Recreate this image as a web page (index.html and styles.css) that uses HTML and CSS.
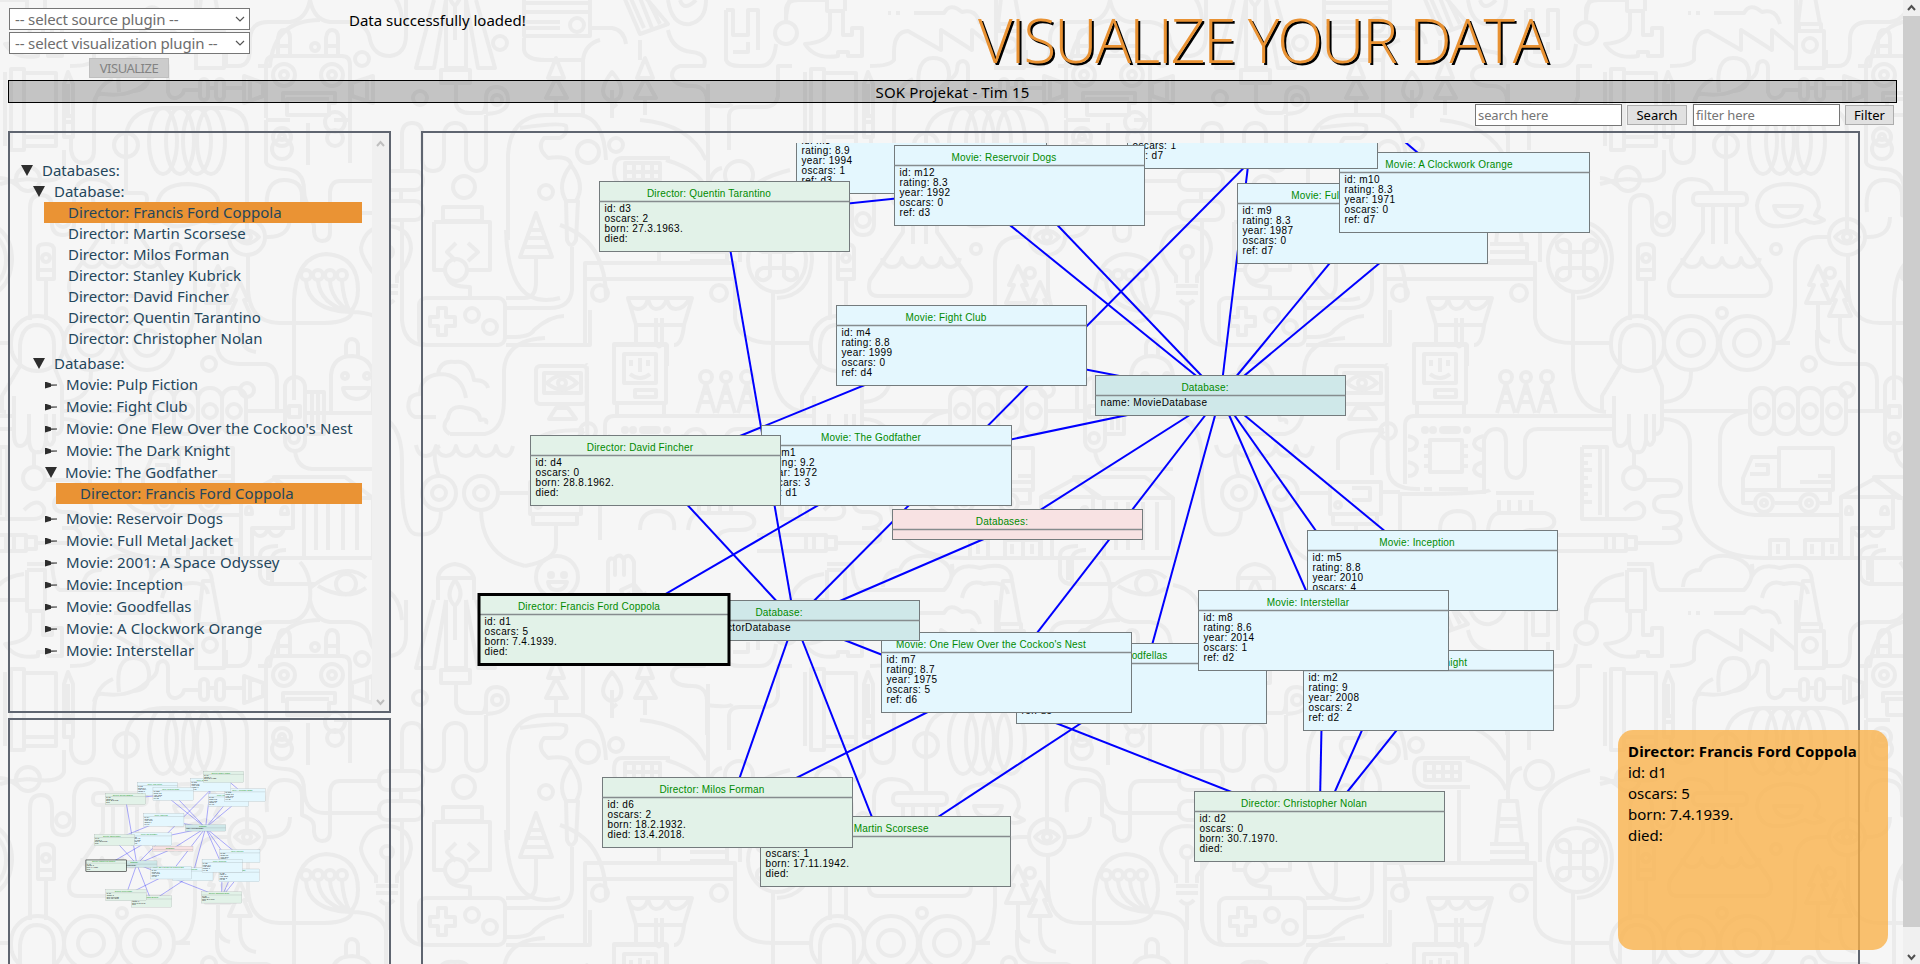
FILE: index.html
```html
<!DOCTYPE html>
<html lang="en">
<head>
<meta charset="utf-8">
<title>Visualize your data</title>
<link rel="stylesheet" href="styles.css">
</head>
<body>
<svg class="wallpaper" width="1903" height="964" aria-hidden="true">
  <defs>
    <g id="tile">
      <!-- book, pencil and looping cable -->
      <path d="M24 73H56V146H24M24 137H56"/><path class="solid" d="M11 69H24V150H11z"/><path d="M5 72V146"/>
      <path d="M64 84L68 72L73 84V137H64zM64 116H73M64 122H73M68 84V116"/>
      <path d="M71 137V150Q73 163 83 163Q94 163 94 150V110Q95 86 113 79M94 102Q96 92 104 94Q132 98 149 80"/>
      <path d="M119 92Q115 58 133 58Q149 58 149 75Q149 90 133 91"/>
      <path d="M149 80Q156 76 157 70Q157 61 163 61Q168 62 168 68V92Q170 99 176 98Q183 96 184 90H198M208 88H215M224 88H244"/>
      <rect x="200" y="79" width="8" height="21" rx="4"/><rect x="216" y="79" width="8" height="21" rx="4"/>
      <path d="M244 76L263 83V96L244 103zM373 76L352 83V96L373 103zM250 79V100M367 79V100"/>
      <!-- robot -->
      <path d="M266 118V65Q266 56 275 56H342Q350 56 350 65V118"/>
      <circle cx="284" cy="75" r="11"/><circle cx="332" cy="75" r="11"/><circle class="solid" cx="284" cy="75" r="4"/><circle class="solid" cx="332" cy="75" r="4"/>
      <path d="M283 103V93H335V103H329V115H287V99H329"/>
      <path d="M278 55V38Q279 30 284 30Q290 30 290 38V55M326 55V38Q327 30 332 30Q338 30 338 38V55M278 46H290M326 46H338"/>
      <circle class="solid" cx="315" cy="47" r="4"/>
      <path d="M226 66H238Q250 66 250 48V38Q251 22 268 22H290Q306 20 310 0Q314 20 330 22H350Q368 24 370 40Q374 56 390 56Q406 54 406 35V0"/>
      <path d="M226 66V50M196 0V66"/>
      <path d="M266 120V162Q267 168 285 169Q304 170 304 190Q305 213 325 213H381M266 120H290M334 120H350M308 123V165M350 118V163"/>
      <circle cx="282" cy="137" r="9"/><circle cx="282" cy="137" r="3"/><circle class="solid" cx="282" cy="149" r="10"/>
      <circle class="solid" cx="335" cy="122" r="10"/><circle cx="335" cy="138" r="8"/>
      <path d="M267 212Q264 180 284 180Q302 180 302 196M302 190V215Q314 219 314 226V232Q315 241 322 241Q330 241 330 232V192Q331 181 340 181H381"/>
      <!-- coil -->
      <path d="M126 145V135Q130 108 165 108H225Q247 110 247 132V230"/>
      <ellipse cx="163" cy="141" rx="14" ry="33"/><ellipse cx="180" cy="141" rx="14" ry="33"/><ellipse cx="197" cy="141" rx="14" ry="33"/><ellipse cx="211" cy="141" rx="14" ry="33"/>
      <circle class="solid" cx="126" cy="145" r="12"/><path d="M126 145V192"/>
      <!-- flask -->
      <rect x="93" y="193" width="54" height="12" rx="5"/>
      <path d="M103 206V232L70 280Q66 296 78 296H162Q174 296 170 280L137 232V206M113 206V244M126 206V244"/>
      <path class="fat" d="M113 232V243M126 232V243"/>
      <path d="M82 258Q84 267 92 267Q100 267 102 258Q104 267 112 267Q120 267 122 258Q124 267 132 267Q140 267 141 258Q143 267 151 267Q158 266 160 258"/>
      <!-- speech bubble -->
      <path d="M215 215L224 220Q214 226 205 220Q158 238 157 205Q160 184 188 184Q219 186 219 207z"/><path d="M174 206H202Q200 217 188 217Q176 217 174 206z"/>
      <!-- cables beside the flask -->
      <path d="M30 320V208Q30 195 41 195Q52 195 52 208V225Q53 235 63 235Q73 235 74 225V196Q76 179 92 179Q110 180 112 192"/>
      <circle cx="63" cy="220" r="7"/><circle class="solid" cx="28" cy="179" r="12"/><path d="M0 178Q8 178 18 186M28 179Q60 184 64 172V150M0 184Q14 180 28 179"/>
      <path d="M38 248Q38 244 46 244Q54 244 54 250V279H38zM46 279V320M38 270H54"/><circle cx="46" cy="258" r="4"/>
      <circle cx="247" cy="237" r="18"/><path d="M235 237Q247 224 259 237Q247 250 235 237z"/><circle class="solid" cx="247" cy="237" r="4"/>
      <path d="M229 237H218Q196 238 195 262V305Q193 343 175 343M248 256V290Q250 323 280 323H325Q350 322 352 312M266 237Q290 238 290 217"/>
      <circle cx="176" cy="249" r="5"/><circle cx="230" cy="273" r="5"/><circle cx="122" cy="313" r="5"/>
      <!-- fir trees -->
      <path d="M218 266L209 285H214L206 303H230L222 285H227zM240 282L232 300H236L229 316H251L244 300H248zM218 303V330Q220 340 230 342M240 316V330Q240 350 256 352"/>
      <!-- reel -->
      <path d="M294 400V300Q296 256 326 254Q358 256 358 290Q358 304 350 312M350 312Q382 312 386 330V370"/>
      <circle cx="306" cy="275" r="5"/><circle cx="318" cy="275" r="5"/><circle cx="330" cy="275" r="5"/><circle cx="342" cy="275" r="5"/>
      <path d="M306 281Q308 310 350 312M318 281Q320 304 350 312M330 281Q331 299 350 312M342 281Q343 298 350 312"/>
      <!-- bulb, capsules -->
      <path d="M376 283V276Q361 258 361 248Q365 226 387 226Q410 227 411 248Q410 262 397 276V283"/><circle cx="387" cy="252" r="6"/>
      <path d="M376 286H398M376 293H398M380 300Q387 308 394 300M387 258V283M387 303V330"/>
      <rect x="379" y="171" width="44" height="19" rx="8"/><rect x="379" y="201" width="44" height="19" rx="8"/><path d="M401 190V201"/>
      <path d="M402 170V133Q403 123 412 123Q422 123 422 133V160Q423 171 433 171Q443 171 444 160V133Q446 123 455 123Q465 123 466 133V160Q468 171 477 171Q486 170 486 160V115"/>
      <path d="M402 220V320Q404 344 424 345M506 345H590V310M506 337Q530 338 534 330Q550 316 564 316"/>
      <!-- rocket -->
      <path d="M434 0L416 68H434L446 0M476 0L495 68H478L466 0M446 0V68H466V0M441 70H470V83H441zM456 83V104Q458 113 470 113H480Q486 114 486 100"/>
      <circle cx="497" cy="100" r="5"/><path d="M486 114V98Q486 87 497 87Q508 88 508 100Q508 113 486 114"/>
      <circle cx="420" cy="98" r="7"/><circle cx="500" cy="43" r="7"/><circle cx="362" cy="59" r="7"/>
      <circle cx="464" cy="187" r="11"/><circle cx="546" cy="192" r="7"/><circle cx="588" cy="152" r="11"/><circle cx="616" cy="145" r="7"/>
      <!-- jar with code, tree cone, brush -->
      <path d="M443 207H482V221H443zM434 222H490V270H468M434 222V270H446M456 243L447 252L456 261M468 243L478 252L468 261"/>
      <circle cx="456" cy="270" r="11"/><path d="M447 275Q448 287 470 287V298"/>
      <path d="M536 213L520 257H552zM530 230H542M527 238H546M524 247H549M536 257V282Q536 298 524 298H506"/>
      <path class="solid" d="M571 165Q586 185 576 201H566Q556 184 571 165z"/><path d="M566 201H578L576 240Q571 250 567 240zM572 247V290Q570 308 550 308H506M571 165Q570 155 548 158Q536 148 544 138H560Q568 134 566 126Q560 122 520 128"/>
      <path d="M508 240V155Q510 116 545 115H580Q604 118 606 160M583 115V60Q585 44 600 40"/>
      <!-- game pad -->
      <rect x="419" y="298" width="86" height="47" rx="7"/><path d="M438 308H446V317H455V326H446V335H438V326H430V317H438z"/><circle cx="472" cy="315" r="7"/><circle cx="490" cy="327" r="7"/>
      <!-- trees and leaf -->
      <path d="M556 58L548 78H564zM556 78L546 98H567zM556 98V115M645 58L637 78H653zM645 78L635 98H656zM645 98V115M612 72Q598 90 606 98Q612 104 619 98Q626 88 612 72zM612 90V118M612 108L617 104"/>
      <!-- control box -->
      <path d="M524 0V36H590V0M524 12H590M524 22H560M524 28H560"/><path class="fat" d="M526 3H588"/><circle cx="577" cy="25" r="7"/><path d="M524 38V50Q526 60 545 60H583M590 28H612Q624 30 626 44"/>
      <path d="M621 -10L634 -16L668 24L640 34zM628 -8L644 28M636 -12L652 28M644 -8L660 24M668 0Q672 26 690 24Q706 20 706 0M680 0Q684 12 696 0"/>
      <path d="M668 30Q672 50 692 52Q708 54 704 66H680Q672 68 672 76Q674 86 692 86Q708 86 707 104V135M640 40V60"/>
      <path d="M726 10H733V35H748V10H758V50M733 52H748V42M726 10V60Q728 66 740 66H760Q774 66 776 44"/><circle cx="786" cy="33" r="11"/><path d="M786 22V8Q788 0 798 0H826"/>
      <path d="M707 105Q730 108 732 104M729 150V115Q730 107 740 107H765Q776 107 778 96V66H792"/>
      <path d="M666 160Q700 170 706 190M740 262V210Q742 182 790 170M640 120Q690 124 706 160"/>
      <!-- hammer -->
      <path d="M27 -30H45V11M27 -30V11H45M30 11V30Q28 42 5 44Q15 60 38 56V52H48V56H62V28H52V35H43V11M30 11V28"/>
      <path d="M27 -36H52Q54 -12 60 -10H144Q154 -20 152 -36"/><path d="M-14 20Q-12 -22 24 -26"/>
      <!-- smoke, factory -->
      <path d="M83 -13Q84 -30 100 -30Q106 -46 128 -44Q150 -40 152 -24Q160 -38 180 -32Q210 -40 212 -20M162 -2Q166 -22 184 -16Q206 -20 208 -6M88 13H91M96 13H100M114 13H144Q150 2 162 12Q176 8 180 24"/>
      <path d="M203 -19H212L220 24H198zM199 24H221V31H199zM196 31H224V68H196zM196 50L172 30V50L141 30V50L108 31Q94 32 94 52V60Q90 66 70 66"/><circle cx="210" cy="45" r="7"/>
      <path d="M196 68V70M258 66H270Q274 20 320 20"/>
      <!-- round wheels -->
      <rect x="11" y="316" width="53" height="55" rx="26"/><path d="M20 365V345Q22 325 37 325Q54 326 54 345V365"/>
      <circle cx="91" cy="343" r="27"/><circle cx="91" cy="343" r="13"/><circle cx="147" cy="343" r="27"/><circle cx="147" cy="343" r="13"/>
      <path d="M91 370Q92 400 64 402M773 290V370Q776 410 806 412M773 343H810"/>
      <!-- hand and ruler -->
      <path d="M20 366L2 396V412M54 366L62 386V426Q61 435 54 434V420M54 414V440Q50 450 46 440V414M46 440Q44 454 38 452Q30 454 29 440V414M29 434Q27 446 20 446Q14 446 14 434V396M34 453V467"/>
      <circle cx="34" cy="478" r="11"/>
      <path d="M46 480H70Q81 480 81 488Q80 496 70 496H62Q54 497 54 504Q54 511 62 512H70Q81 513 81 520Q80 527 70 528H62M62 528H74Q82 532 80 540Q78 543 68 543H38"/>
      <path d="M782 447H807V518M782 447V519H834Q846 518 844 508Q838 496 824 510M800 447V515M782 455H792M782 463H788M782 470H792M782 478H788M782 486H792M782 494H788M782 502H792"/>
      <path d="M757 535H806V551H757M806 535H814V551H806M814 535H826V551H814M826 537H836V549H826z"/>
      <!-- batteries -->
      <rect x="150" y="388" width="24" height="46" rx="11"/><rect x="174" y="388" width="24" height="46" rx="11"/><rect x="198" y="388" width="24" height="46" rx="11"/><rect x="222" y="388" width="24" height="46" rx="11"/>
      <circle cx="162" cy="411" r="7"/><circle cx="186" cy="411" r="7"/><circle cx="210" cy="411" r="7"/><circle cx="234" cy="411" r="7"/><circle cx="247" cy="390" r="7"/><circle cx="209" cy="364" r="7"/>
      <path d="M64 411H150M246 411H283M175 343H190M217 330V345Q218 364 240 364H266Q276 366 277 380V411"/>
      <path d="M64 419Q90 420 90 445V500Q95 558 165 558H300M150 411Q120 415 120 440V485Q125 513 155 515H240"/>
      <!-- truck -->
      <path d="M179 448H233V490H179zM179 457H152L143 478V503H153M175 503H198M220 503H230V490M143 490H233M155 465H168V474H150M218 476H233M200 482H233"/>
      <circle cx="164" cy="503" r="9"/><circle cx="209" cy="503" r="9"/><circle class="solid" cx="164" cy="503" r="3"/><circle class="solid" cx="209" cy="503" r="3"/>
      <!-- usb stick, ghost -->
      <rect x="285" y="377" width="20" height="74" rx="10"/><path d="M289 406H300V417H289z"/><circle cx="294" cy="438" r="5"/>
      <path d="M307 392H324V434H307M312 392V430M318 392V430M295 451Q297 468 312 469H373M305 413H373"/>
      <path d="M331 412V375Q333 356 352 356Q371 357 373 375V412M346 356V345Q347 339 352 339Q358 340 358 346V356"/><circle class="solid" cx="345" cy="376" r="3"/><circle class="solid" cx="367" cy="376" r="3"/><path d="M343 388H370Q368 399 356 399Q344 398 343 388z"/>
      <path d="M373 413Q402 420 402 460V480Q402 530 415 534Q440 538 441 512"/>
      <!-- town hall -->
      <path d="M241 497L274 479L300 497zM241 497V558M293 497V528H252V558"/><path class="solid" d="M274 477H345L373 498H298zM246 512Q246 507 249 507Q252 507 252 514H246zM281 514Q281 507 285 507Q288 507 288 514z"/>
      <path d="M252 528Q255 536 260 536Q266 536 268 528Q270 536 276 536Q282 536 284 528M304 500V558M373 498V558H296"/>
      <path class="dash" d="M316 502V550M328 502V550M343 502V550M357 502V550"/>
      <path d="M170 558V540H188V558M205 558V540H240V558M223 540V558M178 544V554M212 544V554M232 544V554M278 546Q260 546 260 556V575Q262 585 275 584H315M286 550Q272 550 272 560V584M268 556V580"/>
      <path d="M310 588Q346 560 366 578M318 586Q346 602 366 588"/><circle cx="346" cy="584" r="10"/>
      <path d="M300 562Q312 575 310 600M373 585Q400 590 402 620"/>
      <!-- clouds, waves -->
      <path d="M436 417H415Q405 412 410 398Q414 394 420 394Q420 376 440 374Q462 374 466 398M438 374Q440 360 455 362Q470 360 474 380Q486 380 488 388M450 434Q440 428 448 418Q450 404 466 408Q480 410 480 420Q488 418 486 424M450 434H485Q504 430 504 400V370Q506 340 545 338"/>
      <path d="M416 445Q418 456 426 456Q434 456 436 446Q438 456 446 456Q454 456 456 446Q458 456 466 456Q474 456 476 446Q478 456 486 456Q494 456 496 446Q498 456 506 456Q511 455 513 446"/>
      <circle cx="439" cy="493" r="17"/><circle cx="439" cy="493" r="7"/><circle cx="481" cy="493" r="17"/><circle cx="481" cy="493" r="7"/>
      <path d="M481 510Q482 556 525 566M498 493H530M439 476Q430 450 440 446"/>
      <!-- monitor with eye, computer -->
      <rect x="536" y="366" width="51" height="38" rx="4"/><path d="M544 373H581V393H544zM556 408H568L576 419H549z"/><path d="M547 383Q562 368 577 383Q562 396 547 383z"/><circle class="solid" cx="562" cy="383" r="4"/>
      <path d="M587 404V425M587 365Q586 364 588 470Q590 490 620 489M538 470V440Q542 430 584 430M572 475V450Q574 440 584 431"/><circle class="solid" cx="588" cy="431" r="8"/>
      <path d="M614 344H666V403H614zM617 405V415M664 405V415M624 354H656V383H624zM635 390H656V397H635zM631 360V366M648 360V366M640 358V372M630 374Q640 382 650 374"/>
      <path class="fat" d="M605 484V426Q605 416 614 416H814"/><path d="M690 490Q686 494 600 494M684 494V440Q686 429 697 429Q706 430 706 442V468Q708 478 716 478Q724 477 725 466V440Q727 429 738 429H814"/>
      <path d="M630 440H662V472H630zM624 446H630M624 456H630M624 466H630M662 446H668M662 456H668M662 466H668M608 436Q617 438 617 443Q616 450 608 450M608 462Q617 464 617 469Q616 476 608 476M684 436Q674 438 674 444Q676 450 684 450M684 462Q674 464 674 470Q676 476 684 476"/>
      <path class="hatch" d="M624 489H632M639 489H668"/><circle cx="625" cy="430" r="2"/><circle cx="633" cy="430" r="2"/><rect x="641" y="428" width="18" height="4" rx="2"/><circle cx="667" cy="430" r="2"/>
      <circle class="solid" cx="706" cy="377" r="6"/><circle cx="726" cy="377" r="5"/><circle class="solid" cx="747" cy="377" r="6"/><path d="M706 383L697 413M706 383L715 413M726 383L717 413M726 383L735 413M747 383L738 413M747 383L756 413M700 402H712M720 402H732M741 402H753M703 393H709M723 393H729M744 393H750"/>
      <!-- keys, disk drive -->
      <path class="hatch2" d="M696 493H734"/><path d="M699 500V513M709 500V513M720 500V513M731 500V513M699 513Q690 514 688 530M699 513H745Q756 516 754 524Q752 530 740 530H730Q716 532 718 540"/>
      <path d="M530 482H581V514H530zM552 488H570V500H552M533 515V524H577V515M556 524V545Q556 560 525 566M600 494V540M674 530Q676 511 657 511Q640 512 640 530M581 492H600"/><circle cx="538" cy="505" r="3"/>
      <circle cx="557" cy="577" r="21"/><circle class="solid" cx="551" cy="575" r="2"/><circle class="solid" cx="564" cy="575" r="2"/><path d="M548 582H567Q565 590 557 590Q549 590 548 582z"/>
      <path d="M438 600V578Q440 566 455 564Q470 566 474 578V600M438 578H474M455 580Q444 596 455 606Q466 594 455 580zM455 606V640"/>
      <path d="M608 596V562Q610 556 615 560V575V558Q620 552 624 560V575V558Q630 552 634 562V596"/>
      <!-- lighthouse, counter, mask -->
      <path d="M700 201H717L722 244H696zM698 219H720M698 226H720M690 244H727V261H690M690 252H727M585 263H735V279H585zM585 279V345M735 279V318Q738 343 773 343M659 263V190M708 201V84"/>
      <circle cx="600" cy="293" r="8"/><circle cx="719" cy="293" r="8"/>
      <path d="M628 298H692L684 325H636zM628 298Q630 309 638 309Q646 309 648 298Q650 309 656 309Q664 309 667 298Q668 309 676 309Q684 309 690 298M636 325V345M684 325Q682 345 674 345M656 318V343Q659 350 662 343V318M614 345H667V366M614 345V366M640 366"/>
      <!-- command badge -->
      <ellipse cx="777" cy="260" rx="29" ry="32"/><path d="M770 252H784V268H770zM770 252H763Q756 250 757 243Q765 236 770 244zM784 252V244Q790 236 797 243Q798 250 791 252zM784 268H791Q798 270 797 277Q790 284 784 276zM770 268V276Q764 284 757 277Q756 270 763 268z"/>
      <path d="M777 220Q812 226 812 260Q810 296 777 298"/>
      <path d="M708 190Q710 170 722 168"/><circle cx="739" cy="175" r="14"/>
      <path d="M670 158H622Q614 158 614 170Q614 187 630 187H670M625 163H660V180H625zM634 163V180M643 163V180M652 163V180M625 172H660"/>
      <path d="M506 230Q508 312 560 298M606 298Q606 240 560 225"/>
    </g>
  </defs>
  <g class="doodle">
    <use href="#tile" x="-800" y="-600"/><use href="#tile" y="-600"/><use href="#tile" x="800" y="-600"/>
    <use href="#tile" x="-800"/><use href="#tile"/><use href="#tile" x="800"/><use href="#tile" x="1600"/>
    <use href="#tile" x="-800" y="600"/><use href="#tile" y="600"/><use href="#tile" x="800" y="600"/><use href="#tile" x="1600" y="600"/>
  </g>
</svg>

<div class="app">
  <div class="page">
    <header class="header">
      <form class="plugins">
        <div class="select"><span>-- select source plugin --</span><svg width="10" height="6"><path d="M1 1L5 5L9 1"/></svg></div>
        <div class="select"><span>-- select visualization plugin --</span><svg width="10" height="6"><path d="M1 1L5 5L9 1"/></svg></div>
        <button class="btn btn-off" type="button">VISUALIZE</button>
      </form>
      <p class="status">Data successfully loaded!</p>
      <h1 class="title">VISUALIZE YOUR DATA</h1>
    </header>
    <div class="team"><span>SOK Projekat - Tim 15</span></div>
    <div class="tools">
      <div class="field">search here</div><button class="btn search" type="button">Search</button>
      <div class="field">filter here</div><button class="btn filter" type="button">Filter</button>
    </div>
    <div class="main">
      <aside class="side">
        <section class="panel tree">
          <ul class="list">
            <li class="d0"><i class="open"></i>Databases:</li>
            <li class="d1"><i class="open"></i>Database:</li>
            <li class="d2 leaf active">Director: Francis Ford Coppola</li>
            <li class="d2 leaf">Director: Martin Scorsese</li>
            <li class="d2 leaf">Director: Milos Forman</li>
            <li class="d2 leaf">Director: Stanley Kubrick</li>
            <li class="d2 leaf">Director: David Fincher</li>
            <li class="d2 leaf">Director: Quentin Tarantino</li>
            <li class="d2 leaf last">Director: Christopher Nolan</li>
            <li class="d1"><i class="open"></i>Database:</li>
            <li class="d2 node"><i class="shut"></i>Movie: Pulp Fiction</li>
            <li class="d2 node"><i class="shut"></i>Movie: Fight Club</li>
            <li class="d2 node wide"><i class="shut"></i>Movie: One Flew Over the Cockoo's Nest</li>
            <li class="d2 node"><i class="shut"></i>Movie: The Dark Knight</li>
            <li class="d2 movie-open"><i class="open"></i>Movie: The Godfather</li>
            <li class="d3 leaf active last">Director: Francis Ford Coppola</li>
            <li class="d2 node"><i class="shut"></i>Movie: Reservoir Dogs</li>
            <li class="d2 node wide"><i class="shut"></i>Movie: Full Metal Jacket</li>
            <li class="d2 node wide"><i class="shut"></i>Movie: 2001: A Space Odyssey</li>
            <li class="d2 node"><i class="shut"></i>Movie: Inception</li>
            <li class="d2 node"><i class="shut"></i>Movie: Goodfellas</li>
            <li class="d2 node wide"><i class="shut"></i>Movie: A Clockwork Orange</li>
            <li class="d2 node"><i class="shut"></i>Movie: Interstellar</li>
          </ul>
          <div class="bar bar-off"><svg width="9" height="7"><path d="M1 6L4.500 2L8 6"/></svg><svg width="9" height="7"><path d="M1 1L4.500 5L8 1"/></svg></div>
        </section>
        <section class="panel mini"><svg id="mini" width="379" height="244"></svg></section>
      </aside>
      <section class="panel canvas"><svg id="graph" width="1435" height="821"></svg></section>
    </div>
  </div>
  <div class="bar bar-page"><svg width="9" height="7"><path d="M1 6L4.500 2L8 6"/></svg><div class="thumb"></div><svg width="9" height="7"><path d="M1 1L4.500 5L8 1"/></svg></div>
</div>
<aside class="info"><b>Director: Francis Ford Coppola</b><br>id: d1<br>oscars: 5<br>born: 7.4.1939.<br>died:</aside>
<script src="script.js"></script>
</body>
</html>
```
FILE: styles.css
```css
* { box-sizing: border-box; }
body { margin: 0; height: 964px; overflow: hidden; background: #f6f6f6; font: 15px/21px "Noto Sans", "Open Sans", sans-serif; color: #000; }
.wallpaper { position: absolute; left: 0; top: 0; z-index: -1; }
.doodle { fill: none; stroke: #ebebeb; stroke-width: 4; stroke-linejoin: round; }
.doodle .solid { fill: #ebebeb; stroke: none; }
.doodle .fat { stroke-width: 7; stroke-linecap: round; }
.doodle .dash { stroke-dasharray: 10 6; stroke-width: 3; }
.doodle .hatch { stroke-width: 9; stroke-dasharray: 3 1.5; }
.doodle .hatch2 { stroke-width: 18; stroke-dasharray: 8 2; }

.app { display: flex; height: 964px; }
.page { flex: 1; padding: 8px 6px 0 8px; display: flex; flex-direction: column; overflow: hidden; }

.header { display: flex; height: 72px; flex: none; }
.plugins { width: 242px; margin: 0; padding-left: 1px; display: flex; flex-direction: column; align-items: center; }
.select { width: 241px; height: 22px; margin-bottom: 2px; border: 1px solid #767676; background: #fff; color: #6d6d6d; padding: 0 4px 0 5px; display: flex; align-items: center; justify-content: space-between; letter-spacing: -.15px; }
.select svg { fill: none; stroke: #555; stroke-width: 1.2; }
.btn { height: 20px; padding: 0; border: 1px solid #adadad; background: #e1e1e1; font: 13px/18px "Noto Sans", sans-serif; color: #000; }
.btn-off { width: 80px; margin: 2px 1px 0 0; border-color: #bfbfbf; background: #ccc; color: #838383; letter-spacing: -.5px; }
.status { margin: 2px 0 0 99px; width: 620px; }
.title { margin: -3px 0 0 9px; font: 300 60px/70px "Open Sans", "Noto Sans", sans-serif; color: #e99233; text-shadow: 2px 2px 0 #000; white-space: nowrap; letter-spacing: -2.1px; }

.team { height: 23px; flex: none; border: 1px solid #000; background: rgba(0, 0, 0, .2); text-align: center; line-height: 22px; }
.team span { letter-spacing: .12px; }
.tools { display: flex; flex: none; justify-content: flex-end; align-items: center; height: 24px; padding-right: 3px; }
.field { width: 147px; height: 22px; border: 1px solid #767676; background: #fff; color: #757575; font-size: 13px; line-height: 20px; padding-left: 2px; letter-spacing: -.1px; }
.search { width: 60px; margin: 0 6px 0 5px; }
.filter { width: 49px; margin-left: 5px; }

.main { display: flex; margin-top: 4px; flex: 1; }
.side { width: 383px; margin-right: 30px; display: flex; flex-direction: column; }
.panel { border: 2px solid #5f6570; }
.tree { height: 582px; margin-bottom: 5px; display: flex; flex: none; }
.list { flex: 1; margin: 27px 10px 0 10px; padding: 0; list-style: none; color: #24465c; }
.list li { display: flex; align-items: center; height: 21px; white-space: nowrap; }
.d0 { padding-left: 1px; }
.d1 { margin-left: 13px; }
.d2 { margin-left: 24px; }
.d3 { margin-left: 36px; }
.list .leaf { padding-left: 24px; }
.list .node { height: 22px; padding-bottom: 1px; }
.list .wide { letter-spacing: .12px; }
.list .movie-open { padding-left: 1px; }
.list .movie-open .open { margin-right: 8px; }
.list .last { margin-bottom: 4px; }
.active { background: #ea9334; letter-spacing: .03px; }
.open { width: 0; margin-right: 9px; border: 6.500px solid transparent; border-top: 11px solid #2e2e2e; border-bottom: 0; }
.shut { width: 12px; height: 7px; margin: 1px 9px 0 1px; background: #2e2e2e; clip-path: polygon(0 0, 50% 28%, 50% 42%, 100% 42%, 100% 58%, 50% 62%, 50% 76%, 0 100%); }
.bar { width: 17px; background: #f0f0f0; display: flex; flex-direction: column; align-items: center; justify-content: space-between; }
.bar svg { fill: none; stroke: #bfbfbf; stroke-width: 2; flex: none; }
.bar-off { padding: 7px 0 5px; width: 17px; }
.bar-page { padding: 4px 0 3px; }
.bar-page svg { stroke: #505050; }
.thumb { width: 100%; background: #cdcdcd; flex: 1; margin: 5px 0 27px; }
.mini { flex: 1; }
.canvas { width: 1439px; padding-top: 10px; }
.mini svg, .canvas svg { display: block; }

.info { position: absolute; left: 1618px; top: 730px; width: 270px; height: 220px; padding: 11px 10px; border-radius: 15px; background: rgba(250, 177, 72, .78); white-space: nowrap; }
.info b { letter-spacing: .15px; }

.edge { stroke: #00f; stroke-width: 2; }
.box { stroke: #747b7d; stroke-width: 1; }
.split { stroke: #868c8e; stroke-width: 1.400; }
.movie .box { fill: #e4f7fe; }
.director .box { fill: #e2f2e8; }
.base .box { fill: #cfe8e9; }
.root .box { fill: #f8e2e3; }
.chosen { fill: none; stroke: #000; stroke-width: 3; }
.label { font: 10px "Liberation Sans", Arial, sans-serif; letter-spacing: .36px; fill: #000; }
.name { fill: #008a00; text-anchor: middle; letter-spacing: .18px; }
```
FILE: script.js
```js
const D = (x, y, name, id, oscars, born, died = "") =>
  ({ x, y, h: 70, kind: "director", name: "Director: " + name, rows: ["id: " + id, "oscars: " + oscars, "born: " + born, "died: " + died] });
const M = (x, y, name, id, rating, year, oscars, ref) =>
  ({ x, y, h: 80, kind: "movie", name: "Movie: " + name, rows: ["id: " + id, "rating: " + rating, "year: " + year, "oscars: " + oscars, "ref: " + ref] });

const nodes = {
  root: { x: 892.5, y: 509.5, h: 30, kind: "root", name: "Databases:", rows: [] },
  mdb: { x: 1095.5, y: 375.5, h: 40, kind: "base", name: "Database:", rows: ["name: MovieDatabase"] },
  m6: M(1016.5, 643.5, "Goodfellas", "m6", "8.7", 1990, 1, "d5"),
  m5: M(1307.5, 530.5, "Inception", "m5", "8.8", 2010, 4, "d2"),
  m2: M(1303.5, 650.5, "The Dark Knight", "m2", "9", 2008, 2, "d2"),
  m8: M(1198.5, 590.5, "Interstellar", "m8", "8.6", 2014, 1, "d2"),
  m7: M(881.5, 632.5, "One Flew Over the Cockoo's Nest", "m7", "8.7", 1975, 5, "d6"),
  ddb: { x: 669.5, y: 600.5, h: 40, kind: "base", name: "Database:", rows: ["name: DirectorDatabase"] },
  m9: M(1237.5, 183.5, "Full Metal Jacket", "m9", "8.3", 1987, 0, "d7"),
  m10: M(1339.5, 152.5, "A Clockwork Orange", "m10", "8.3", 1971, 0, "d7"),
  m11: M(1127.5, 88.5, "2001: A Space Odyssey", "m11", "8.3", 1968, 1, "d7"),
  m3: M(796.5, 113.5, "Pulp Fiction", "m3", "8.9", 1994, 1, "d3"),
  m12: M(894.5, 145.5, "Reservoir Dogs", "m12", "8.3", 1992, 0, "d3"),
  m4: M(836.5, 305.5, "Fight Club", "m4", "8.8", 1999, 0, "d4"),
  m1: M(761.5, 425.5, "The Godfather", "m1", "9.2", 1972, 3, "d1"),
  d4: D(530.5, 435.5, "David Fincher", "d4", 0, "28.8.1962."),
  d3: D(599.5, 181.5, "Quentin Tarantino", "d3", 2, "27.3.1963."),
  d5: D(760.5, 816.5, "Martin Scorsese", "d5", 1, "17.11.1942."),
  d6: D(602.5, 777.5, "Milos Forman", "d6", 2, "18.2.1932.", "13.4.2018."),
  d2: D(1194.5, 791.5, "Christopher Nolan", "d2", 0, "30.7.1970."),
  d7: D(1206.5, 44.5, "Stanley Kubrick", "d7", 1, "26.7.1928."),
  d1: D(479.5, 594.5, "Francis Ford Coppola", "d1", 5, "7.4.1939.")
};
nodes.d1.chosen = true;

const edges = [["root", "mdb"], ["root", "ddb"]];
for (let i = 1; i <= 7; i++) edges.push(["ddb", "d" + i]);
const refs = [1, 2, 3, 4, 2, 5, 6, 2, 7, 7, 7, 3];
refs.forEach((d, i) => edges.push(["mdb", "m" + (i + 1)], ["m" + (i + 1), "d" + d]));

function draw(id, transform) {
  const cx = n => n.x + 125, cy = n => n.y + n.h / 2;
  let out = `<g transform="${transform}">`;
  for (const [a, b] of edges) {
    const p = nodes[a], q = nodes[b];
    out += `<line class="edge" x1="${cx(p)}" y1="${cy(p)}" x2="${cx(q)}" y2="${cy(q)}"/>`;
  }
  for (const n of Object.values(nodes)) {
    out += `<g class="${n.kind}"><rect class="box" x="${n.x}" y="${n.y}" width="250" height="${n.h}"/>`;
    out += `<line class="split" x1="${n.x}" y1="${n.y + 20}" x2="${n.x + 250}" y2="${n.y + 20}"/>`;
    out += `<text class="label name" x="${n.x + 109.5}" y="${n.y + 15}">${n.name}</text>`;
    n.rows.forEach((r, i) => { out += `<text class="label" x="${n.x + 5}" y="${n.y + 30 + i * 10}">${r}</text>`; });
    if (n.chosen) out += `<rect class="chosen" x="${n.x - .5}" y="${n.y}" width="250" height="${n.h}"/>`;
    out += "</g>";
  }
  document.getElementById(id).innerHTML = out + "</g>";
}
draw("graph", "translate(-423 -143)");
draw("mini", "translate(-1.4 44) scale(.1614)");
```
